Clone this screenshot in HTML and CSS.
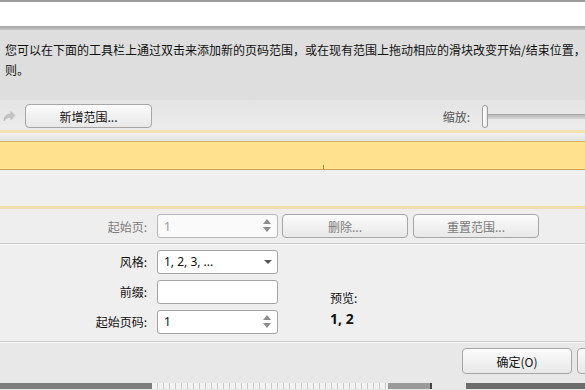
FILE: index.html
```html
<!DOCTYPE html>
<html>
<head>
<meta charset="utf-8">
<link rel="stylesheet" href="styles.css">
</head>
<body>
<div class="screen">
  <div class="topline"></div>
  <div class="whitebar"></div>
  <div class="shade"></div>
  <div class="desc">
    <div class="line">您可以在下面的工具栏上通过双击来添加新的页码范围，或在现有范围上拖动相应的滑块改变开始/结束位置，</div>
    <div class="line">则。</div>
  </div>
  <div class="toolbar">
    <svg class="redo" width="14" height="14" viewBox="0 0 14 14"><path d="M2 12 C2 7 5 5 9 5 L9 2.5 L13 6.5 L9 10.5 L9 8 C6 8 4 9 2 12 Z" fill="#c4c4c4" stroke="#b0b0b0" stroke-width="0.6"/></svg>
    <button class="btn add">新增范围...</button>
    <div class="spacer"></div>
    <span class="zoomlabel">缩放:</span>
    <div class="slider"><div class="thumb"></div><div class="track"></div></div>
  </div>
  <div class="yline"></div>
  <div class="gap"></div>
  <div class="band"><div class="tick"></div></div>
  <div class="lower"></div>
  <div class="yline2"></div>
  <div class="rangerow">
    <span class="label disabled">起始页:</span>
    <div class="field spin dis"><span>1</span><i class="spinarrows"><b class="up"></b><b class="down"></b></i></div>
    <button class="btn small dtext">删除...</button>
    <button class="btn small dtext">重置范围...</button>
  </div>
  <div class="sep"></div>
  <div class="formarea">
    <div class="form">
      <span class="label">风格:</span>
      <div class="field select"><span>1, 2, 3, ...</span><b class="caret"></b></div>
      <span class="label">前缀:</span>
      <div class="field"></div>
      <span class="label">起始页码:</span>
      <div class="field spin"><span>1</span><i class="spinarrows"><b class="up"></b><b class="down"></b></i></div>
    </div>
    <div class="preview">
      <div class="ptitle">预览:</div>
      <div class="pval">1, 2</div>
    </div>
  </div>
  <div class="sep"></div>
  <div class="footer">
    <button class="btn foot">确定(O)</button>
    <button class="btn foot next"></button>
  </div>
  <div class="strip">
    <div class="s1"></div><div class="s2"></div><div class="s3"></div><div class="s4"></div><div class="s5"></div>
  </div>
</div>
</body>
</html>
```
FILE: styles.css
```css
html, body { margin: 0; padding: 0; }
body { width: 585px; height: 390px; overflow: hidden; font-family: "Noto Sans CJK SC", "Noto Sans", sans-serif; font-size: 12px; color: #111; }
.screen { width: 585px; height: 390px; display: flex; flex-direction: column; background: #e6e6e6; overflow: hidden; }
.topline { height: 2px; background: #9c9c9c; flex: none; }
.whitebar { height: 24px; background: #fff; flex: none; }
.shade { height: 4px; background: linear-gradient(#a4a4a4, #c4c4c4); flex: none; }
.desc { height: 70px; flex: none; background: #dedede; padding: 10px 0 0 5px; box-sizing: border-box; overflow: hidden; }
.line { height: 20px; line-height: 20px; white-space: nowrap; }
.toolbar { height: 30px; flex: none; display: flex; align-items: center; background: linear-gradient(#e4e4e4, #ececec); box-sizing: border-box; padding-top: 2px; }
.redo { margin-left: 2px; width: 14px; height: 14px; flex: none; }
.btn { font-family: inherit; font-size: 12px; color: #111; border: 1px solid #a6a6a6; border-radius: 4px; background: linear-gradient(#fbfbfb, #e8e8e8); padding: 0; box-sizing: border-box; flex: none; }
.add { margin-left: 9px; width: 127px; height: 24px; }
.spacer { flex: 1; }
.zoomlabel { color: #555; margin-right: 12px; }
.slider { width: 103px; height: 24px; display: flex; align-items: center; flex: none; }
.thumb { width: 6px; height: 23px; border: 1px solid #9a9a9a; border-radius: 3px; background: linear-gradient(90deg, #fff, #ececec); flex: none; box-sizing: border-box; }
.track { flex: 1; height: 4px; background: linear-gradient(#b8b8b8, #d8d8d8); border-top: 1px solid #a8a8a8; }
.yline { height: 3px; flex: none; background: #f2e4b4; }
.gap { height: 8px; flex: none; background: linear-gradient(#f0f0f0, #e2e2e2); }
.band { height: 29px; flex: none; background: #ffe18e; border-top: 1px solid #d6b366; border-bottom: 1px solid #c9a355; box-sizing: border-box; position: relative; }
.tick { position: absolute; left: 323px; bottom: 0; width: 1px; height: 4px; background: #a8863c; }
.lower { height: 36px; flex: none; background: #efefef; }
.yline2 { height: 3px; flex: none; background: linear-gradient(#f3dfa6, #eadcb8); }
.rangerow { height: 34px; flex: none; display: flex; align-items: center; background: #eeeeee; }
.label { width: 147px; text-align: right; flex: none; font-size: 12px; }
.disabled { color: #7c7c7c; }
.rangerow .field { margin-left: 10px; }
.field { width: 121px; height: 24px; box-sizing: border-box; border: 1px solid #a4a4a4; border-radius: 3px; background: #fff; display: flex; align-items: center; padding-left: 6px; position: relative; font-family: "Noto Sans", "Noto Sans CJK SC", sans-serif; }
.field.dis { color: #9a9a9a; background: #fafafa; border-color: #b8b8b8; }
.small { width: 126px; height: 24px; margin-left: 4px; }
.small + .small { margin-left: 5px; }
.dtext { color: #7a7a7a; }
.spinarrows { position: absolute; right: 6px; top: 4px; display: flex; flex-direction: column; gap: 3px; }
.up { width: 0; height: 0; border-left: 4px solid transparent; border-right: 4px solid transparent; border-bottom: 5px solid #8c8c8c; }
.down { width: 0; height: 0; border-left: 4px solid transparent; border-right: 4px solid transparent; border-top: 5px solid #8c8c8c; }
.caret { position: absolute; right: 5px; top: 9px; width: 0; height: 0; border-left: 4px solid transparent; border-right: 4px solid transparent; border-top: 4px solid #555; }
.sep { height: 2px; flex: none; background: #cbcbcb; border-bottom: 1px solid #f8f8f8; box-sizing: border-box; }
.formarea { height: 96px; flex: none; display: flex; background: #efefef; }
.form { display: grid; grid-template-columns: 147px 121px; column-gap: 10px; row-gap: 7px; padding-top: 5px; align-items: center; grid-auto-rows: 23px; }
.form .label { width: auto; }
.form .field { height: 24px; }
.preview { margin-left: 52px; padding-top: 43px; }
.ptitle { height: 20px; line-height: 20px; }
.pval { font-weight: bold; font-size: 14px; line-height: 21px; font-family: "Noto Sans", "Noto Sans CJK SC", sans-serif; }
.footer { height: 40px; flex: none; display: flex; align-items: flex-start; padding: 5px 0 0 462px; box-sizing: border-box; background: #e8e8e8; overflow: hidden; }
.foot { width: 110px; height: 26px; }
.foot.next { margin-left: 5px; }
.strip { height: 6px; flex: none; display: flex; }
.s1 { width: 152px; background: #7c7c7c; }
.s2 { width: 236px; background: repeating-linear-gradient(90deg, #f2f2f2 0 5px, #c8c8c8 5px 6px); }
.s3 { width: 42px; background: #9a9a9a; }
.s4 { width: 34px; background: #e8e8e8; border-left: 2px solid #444; }
.s5 { flex: 1; background: #6c6c6c; }
```
